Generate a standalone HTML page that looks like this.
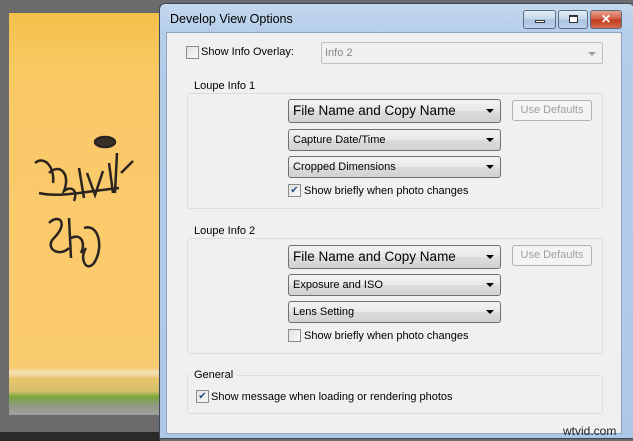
<!DOCTYPE html>
<html><head><style>
*{margin:0;padding:0;box-sizing:border-box}
body{width:633px;height:441px;overflow:hidden;background:#6b6b6b;position:relative;font-family:"Liberation Sans",sans-serif;font-size:11px;color:#000}
.a{position:absolute}
.photo{left:9px;top:13px;width:151px;height:402px;background:linear-gradient(180deg,#f4c04a 0%,#f8c860 12%,#fac96a 30%,#fbca6c 70%,#f8cb6e 88%,#f6e2b8 89.5%,#e6c46a 91%,#d8c06e 94%,#7aa63a 95.5%,#8e9a80 97.5%,#a0a0a0 100%)}
.frame{left:159px;top:3px;width:476px;height:436px;border:1px solid #3c4a5c;border-radius:6px 6px 0 0;background:linear-gradient(180deg,#c4d8ee 0,#b5cde9 30px,#adc8e6 100%)}
.client{left:166px;top:32px;width:456px;height:402px;background:#f0f0f0;border:1px solid #8ea4c0}
.title{left:170px;top:12px;font-size:12.5px}
.wb{top:10px;height:19px;border:1px solid #5a6b84;border-radius:3px;background:linear-gradient(180deg,#e4eef8,#c2d5ea 50%,#a9c1de 51%,#bcd2ec)}
.close{background:linear-gradient(180deg,#e8a08c,#d0583c 50%,#c03a1c 51%,#d86a4c)}
.cb{width:13px;height:13px;border:1px solid #8a8a8a;background:linear-gradient(135deg,#e0e0e0,#fafafa)}
.grp{border:1px solid #d5dfe5;border-radius:3px}
.lbl{background:#f0f0f0;padding:0 3px}
.combo{left:288px;width:213px;border:1px solid #707070;border-radius:3px;background:linear-gradient(180deg,#f3f3f3,#e8e8e8 50%,#dcdcdc 51%,#d2d2d2);padding-left:4px;white-space:nowrap}
.combo:after{content:"";position:absolute;right:6px;top:50%;margin-top:-2px;border-left:4px solid transparent;border-right:4px solid transparent;border-top:4px solid #000}
.btn{left:512px;width:80px;height:21px;border:1px solid #adb2b5;border-radius:3px;background:#f4f4f4;color:#a0a0a0;text-align:center;line-height:19px}
.chk{font-size:10px;line-height:11px;text-align:center;color:#2a4e8a}
</style></head><body>
<div class="a photo"></div>
<svg class="a" style="left:9px;top:13px" width="151" height="402" fill="none" stroke="#2a2420" stroke-width="2.5">
<ellipse cx="96" cy="129" rx="10" ry="5" fill="#3a3028"/>
<path d="M26 150c10-8 20 5 18 20M40 160c10-10 22 0 15 18 8-6 14 0 10 10M70 155l5 30M78 160l8 22 8-24M100 150l4 30M108 140l-2 40M112 160l12-12M30 180c20 5 50-2 80-5"/>
<path d="M40 210c10-10 20 0 5 15-10 10 5 20 15 10M60 205l2 40M62 225c10-5 15 5 10 15M75 215c15-5 20 20 10 35-8 10-15-5-8-15"/>
</svg>
<div class="a" style="left:0;top:432px;width:160px;height:9px;background:#2a2a2a"></div>
<div class="a frame"></div>
<div class="a client"></div>
<div class="a title">Develop View Options</div>
<div class="a wb" style="left:523px;width:33px"><div class="a" style="left:11px;top:9px;width:10px;height:3px;border:1px solid #333;background:#fff"></div></div>
<div class="a wb" style="left:558px;width:30px"><div class="a" style="left:10px;top:4px;width:9px;height:8px;border:1px solid #333;border-top-width:2px;background:#fff"></div></div>
<div class="a wb close" style="left:590px;width:32px;color:#fff;text-align:center;font-weight:bold;font-size:12px;line-height:16px">✕</div>

<div class="a cb" style="left:186px;top:46px"></div>
<div class="a" style="left:201px;top:46px">Show Info Overlay:</div>
<div class="a" style="left:321px;top:42px;width:282px;height:22px;border:1px solid #c0c0c0;border-radius:2px;background:#f0f0f0;color:#8a8a8a;padding:4px 0 0 3px">Info 2<span class="a" style="right:6px;top:9px;border-left:4px solid transparent;border-right:4px solid transparent;border-top:4px solid #a0a0a0"></span></div>

<div class="a grp" style="left:187px;top:93px;width:416px;height:116px"></div>
<div class="a lbl" style="left:191px;top:80px">Loupe Info 1</div>
<div class="a combo" style="top:99px;height:24px;font-size:13.5px;line-height:22px">File Name and Copy Name</div>
<div class="a btn" style="top:100px">Use Defaults</div>
<div class="a combo" style="top:129px;height:22px;line-height:20px">Capture Date/Time</div>
<div class="a combo" style="top:156px;height:22px;line-height:20px">Cropped Dimensions</div>
<div class="a cb chk" style="left:288px;top:184px">✔</div>
<div class="a" style="left:304px;top:185px">Show briefly when photo changes</div>

<div class="a grp" style="left:187px;top:238px;width:416px;height:116px"></div>
<div class="a lbl" style="left:191px;top:225px">Loupe Info 2</div>
<div class="a combo" style="top:245px;height:24px;font-size:13.5px;line-height:22px">File Name and Copy Name</div>
<div class="a btn" style="top:245px">Use Defaults</div>
<div class="a combo" style="top:274px;height:22px;line-height:20px">Exposure and ISO</div>
<div class="a combo" style="top:301px;height:22px;line-height:20px">Lens Setting</div>
<div class="a cb" style="left:288px;top:329px"></div>
<div class="a" style="left:304px;top:330px">Show briefly when photo changes</div>

<div class="a grp" style="left:187px;top:375px;width:416px;height:39px"></div>
<div class="a lbl" style="left:191px;top:369px">General</div>
<div class="a cb chk" style="left:196px;top:390px">✔</div>
<div class="a" style="left:211px;top:391px">Show message when loading or rendering photos</div>

<div class="a" style="left:563px;top:424px;font-size:12px;color:#222">wtvid.com</div>
</body></html>
